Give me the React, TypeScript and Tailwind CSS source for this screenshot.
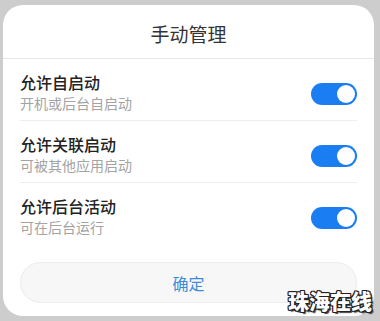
import React from "react";

const rows = [
  { title: "允许自启动", sub: "开机或后台自启动" },
  { title: "允许关联启动", sub: "可被其他应用启动" },
  { title: "允许后台活动", sub: "可在后台运行" },
];

function Toggle() {
  return (
    <div className="relative w-[46px] h-[22px] rounded-full bg-[#1a7ef2] shrink-0 mt-[3px]">
      <div className="absolute right-[2px] top-[2px] w-[18px] h-[18px] rounded-full bg-white" />
    </div>
  );
}

export default function App() {
  return (
    <div
      className="relative w-[380px] h-[321px] bg-[#cdcdcd] pt-[5px] pl-[3px] pr-[6px] overflow-hidden"
      style={{ fontFamily: '"Noto Sans CJK SC", "Noto Sans", sans-serif' }}
    >
      <div className="w-[371px] h-[311px] bg-white rounded-[20px] flex flex-col">
        <div className="pt-[17px] pb-[12px] text-center text-[19px] leading-[24px] text-[#333]">
          手动管理
        </div>
        <div className="h-px bg-[#e6e6e6]" />
        <div className="px-[17px] flex flex-col">
          {rows.map((r, i) => (
            <div
              key={r.title}
              className={
                "flex items-center justify-between pt-[13px] pb-[7px] " +
                (i < rows.length - 1 ? "border-b border-[#eeeeee]" : "")
              }
            >
              <div className="flex flex-col">
                <div className="text-[16px] leading-[21px] font-medium text-[#222]">{r.title}</div>
                <div className="text-[14px] leading-[20px] text-[#a3a3a3]">{r.sub}</div>
              </div>
              <Toggle />
            </div>
          ))}
          <div className="mt-[18px] h-[41px] rounded-full bg-[#f7f7f7] border border-[#ececec] flex items-center justify-center text-[16px] text-[#3e8ad6]">
            确定
          </div>
        </div>
      </div>
      <div
        className="absolute left-[288px] top-[288px] text-[21px] leading-[24px] font-black text-white"
        style={{
          fontFamily: '"Noto Sans CJK SC", sans-serif',
          textShadow:
            "1px 0 0 #222, -1px 0 0 #222, 0 1px 0 #222, 0 -1px 0 #222, 1px 1px 0 #222, -1px -1px 0 #222, 1px -1px 0 #222, -1px 1px 0 #222, 2px 2px 1px #444",
        }}
      >
        珠海在线
      </div>
    </div>
  );
}
